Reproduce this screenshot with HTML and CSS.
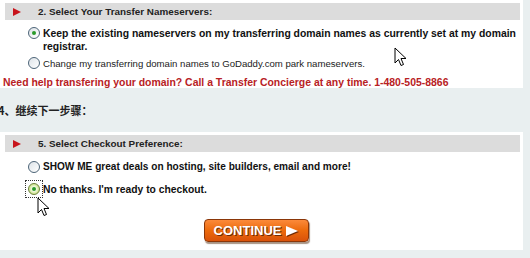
FILE: index.html
```html
<!DOCTYPE html>
<html>
<head>
<meta charset="utf-8">
<link rel="stylesheet" href="styles.css">
</head>
<body>
<div class="page">
  <section class="panel panel-top">
    <div class="bar"><span class="tri"></span><span class="bar-title">2. Select Your Transfer Nameservers:</span></div>
    <div class="opt opt-first">
      <span class="radio checked"></span>
      <span class="opt-text bold keep">Keep the existing nameservers on my transferring domain names as currently set at my domain<br>registrar.</span>
    </div>
    <div class="opt opt-second">
      <span class="radio"></span>
      <span class="opt-text small">Change my transferring domain names to GoDaddy.com park nameservers.</span>
    </div>
    <p class="help">Need help transfering your domain? Call a Transfer Concierge at any time. 1-480-505-8866</p>
    <svg class="cursor cursor-a" width="13" height="20" viewBox="0 0 13 20"><path d="M1 1 L1 16 L4.5 12.5 L7 18.5 L9.5 17.5 L7 11.5 L12 11.5 Z" fill="#fff" stroke="#000" stroke-width="1" stroke-linejoin="round"/></svg>
  </section>
  <div class="step">4、继续下一步骤：</div>
  <section class="panel panel-bottom">
    <div class="bar"><span class="tri"></span><span class="bar-title">5. Select Checkout Preference:</span></div>
    <div class="opt opt-show">
      <span class="radio"></span>
      <span class="opt-text bold show">SHOW ME great deals on hosting, site builders, email and more!</span>
    </div>
    <div class="opt opt-no">
      <span class="focus"><span class="radio checked hover"></span></span>
      <span class="opt-text bold tight">No thanks. I'm ready to checkout.</span>
    </div>
    <div class="actions">
      <button class="continue">CONTINUE <span class="play"></span></button>
    </div>
    <svg class="cursor cursor-b" width="13" height="20" viewBox="0 0 13 20"><path d="M1 1 L1 16 L4.5 12.5 L7 18.5 L9.5 17.5 L7 11.5 L12 11.5 Z" fill="#fff" stroke="#000" stroke-width="1" stroke-linejoin="round"/></svg>
  </section>
</div>
</body>
</html>
```
FILE: styles.css
```css
html, body {
  margin: 0;
  padding: 0;
}
body {
  background: #e9eff0;
  font-family: "Liberation Sans", Arial, sans-serif;
  color: #111;
  width: 530px;
  height: 258px;
  overflow: hidden;
}
.page {
  width: 523px;
}
.panel {
  background: #fff;
  position: relative;
}
.panel-top {
  padding: 3px 0 0 0;
  height: 85px;
}
.panel-bottom {
  padding: 3px 0 0 0;
  height: 115px;
}
.bar {
  margin: 0 3px 0 5px;
  height: 17px;
  background: #dcdcdc;
  display: flex;
  align-items: center;
  font-size: 9.9px;
  font-weight: bold;
  color: #222;
}
.tri {
  width: 0;
  height: 0;
  border-left: 8px solid #c8141c;
  border-top: 4px solid transparent;
  border-bottom: 4px solid transparent;
  margin-left: 8px;
  margin-right: 17px;
}
.opt {
  display: flex;
  align-items: flex-start;
  padding-left: 28px;
}
.opt-first { margin-top: 6px; }
.opt-second { margin-top: 3px; }
.radio {
  flex: none;
  width: 10px;
  height: 10px;
  border: 1px solid #4c6477;
  border-radius: 50%;
  background: linear-gradient(135deg, #dde3e8, #fff);
  position: relative;
  margin-top: 1px;
}
.radio.checked::after {
  content: "";
  position: absolute;
  left: 3px;
  top: 3px;
  width: 4px;
  height: 4px;
  border-radius: 50%;
  background: #2a9a2a;
}
.radio.hover {
  background: radial-gradient(circle, #fff 20%, #d6e9a0 60%, #b9d66a 100%);
  border-color: #6b7f3a;
}
.opt-text {
  margin-left: 3px;
  font-size: 10.5px;
  line-height: 13px;
}
.keep {
  font-size: 10.4px;
  margin-top: 1px;
  white-space: nowrap;
}
.show {
  font-size: 10.1px;
}
.bold { font-weight: bold; }
.small {
  font-size: 9.6px;
  color: #222;
  margin-top: 1px;
}
.help {
  margin: 7px 0 0 3px;
  color: #b82124;
  font-size: 10.45px;
  font-weight: bold;
}
.step {
  height: 44px;
  display: flex;
  align-items: center;
  font-family: "Noto Sans CJK SC", sans-serif;
  font-size: 11px;
  font-weight: bold;
  margin-left: -2px;
  color: #222;
}
.opt-show { margin-top: 8px; }
.opt-no { margin-top: 7px; padding-left: 25px; }
.focus {
  border: 1px dotted #333;
  padding: 2px;
  display: flex;
}
.focus .radio { margin-top: 0; }
.tight { margin-left: 0; margin-top: 3px; font-size: 10.3px; }
.actions {
  display: flex;
  justify-content: center;
  margin-top: 21px;
  padding-right: 11px;
}
.continue {
  width: 105px;
  height: 23px;
  border: 1px solid #8a3608;
  border-radius: 4px;
  background: linear-gradient(#fb8a3a, #ec6a0c 50%, #d9520a);
  color: #fff;
  font-family: "Liberation Sans", Arial, sans-serif;
  font-weight: bold;
  font-size: 13px;
  text-shadow: 1px 1px 0 #6e2a05;
  box-shadow: 1px 2px 1px rgba(80,40,10,0.5);
  display: flex;
  align-items: center;
  justify-content: center;
  gap: 5px;
  padding: 0;
}
.play {
  width: 0;
  height: 0;
  border-left: 12px solid #fff;
  border-top: 5px solid transparent;
  border-bottom: 5px solid transparent;
  filter: drop-shadow(1px 1px 0 #6e2a05);
}
.cursor { position: absolute; }
.cursor-a { left: 394px; top: 47px; }
.cursor-b { left: 37px; top: 65px; }
```
